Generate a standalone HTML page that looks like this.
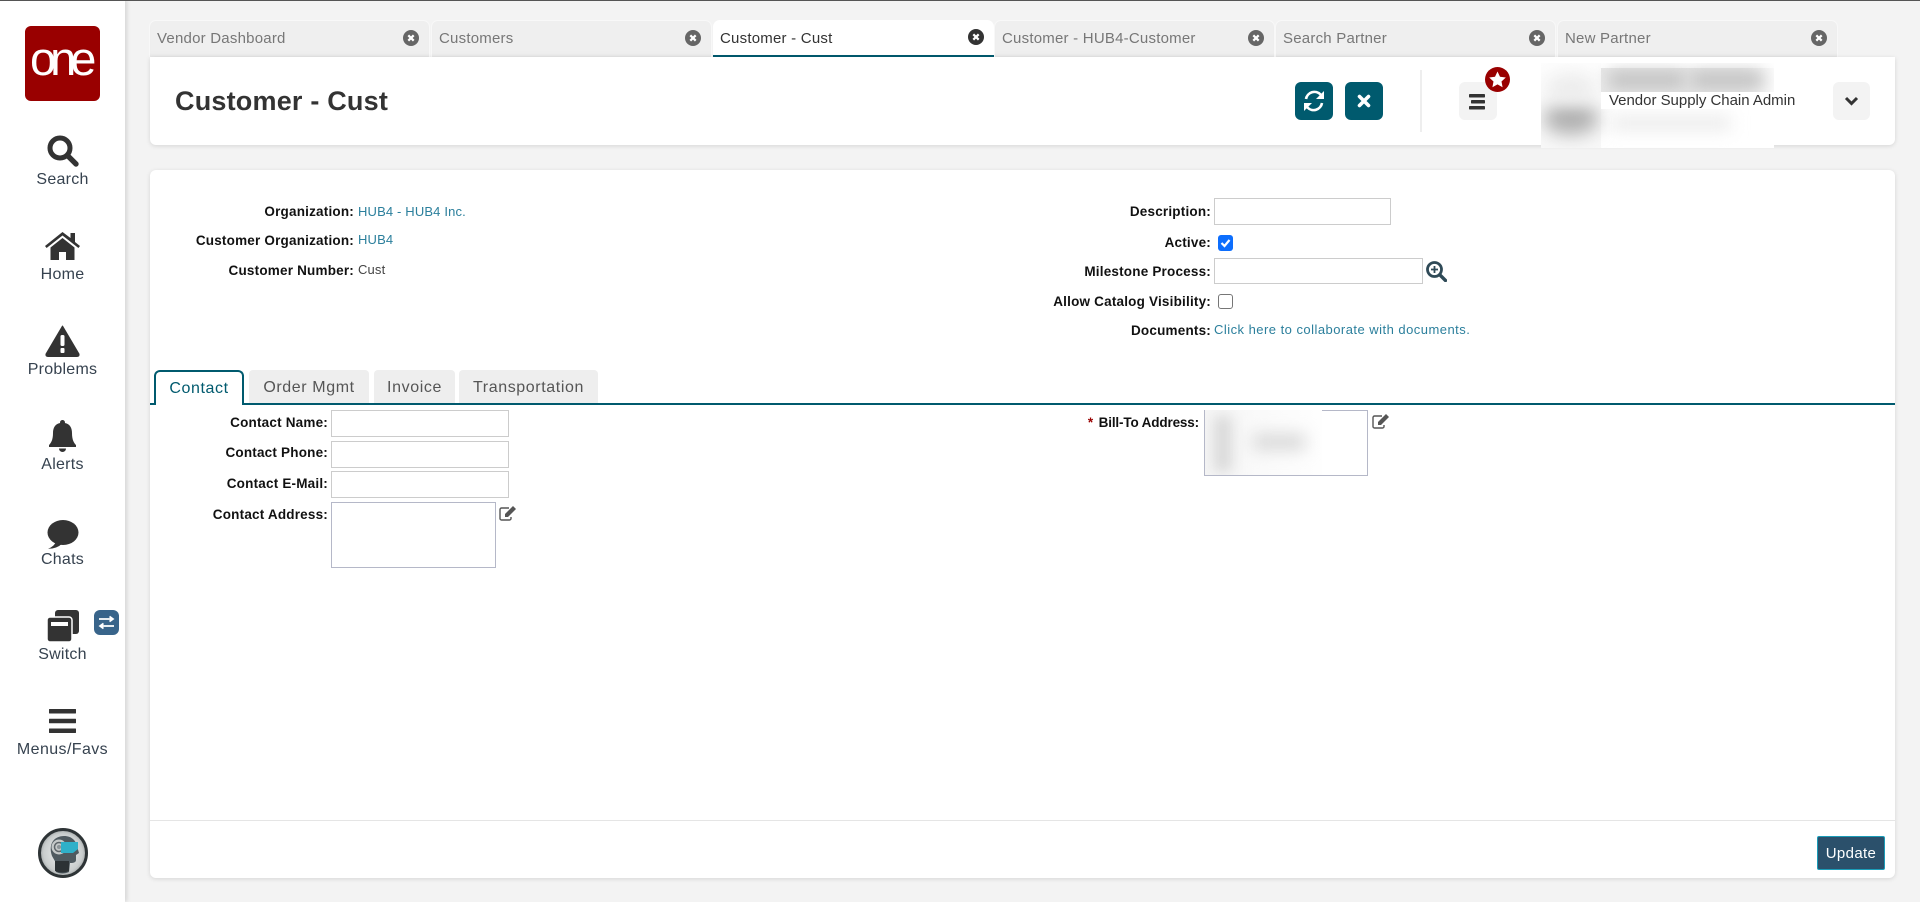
<!DOCTYPE html>
<html lang="en"><head><meta charset="utf-8"><title>Customer - Cust</title>
<style>
*{box-sizing:border-box}
html,body{margin:0;padding:0;width:1920px;height:902px;overflow:hidden;background:#f3f3f3;font-family:"Liberation Sans",sans-serif;color:#333}
.a{position:absolute}
.nav{position:absolute;left:0;width:125px;text-align:center;font-size:16px;letter-spacing:.25px;color:#36424f;line-height:20px}
.ic{position:absolute}
.tab{position:absolute;top:20px;width:281px;height:37px;background:#efefef;border:1px solid #f8f8f8;border-bottom:0;border-radius:7px 7px 0 0;font-size:15px;letter-spacing:.22px;color:#777;line-height:36px;padding-left:7px;box-shadow:inset 0 -5px 6px -5px #ddd}
.tab.on{background:#fff;color:#333;border:0;border-bottom:2px solid #005a6e;padding-left:7px;box-shadow:none;line-height:37px}
.x{position:absolute;right:10px;top:9px;width:16px;height:16px}
.l{position:absolute;font-weight:bold;font-size:13.5px;letter-spacing:.2px;color:#111;text-align:right;line-height:18px;white-space:nowrap}
.v{position:absolute;font-size:13px;letter-spacing:.15px;line-height:18px;white-space:nowrap;color:#2b7f9c}
.in{position:absolute;background:#fff;border:1px solid #ccc}
.ta{position:absolute;background:#fff;border:1px solid #b5b8c8}
.st{position:absolute;top:370px;height:33px;background:#eee;border-radius:4px 4px 0 0;font-size:16px;letter-spacing:.6px;color:#555;text-align:center;line-height:35px}
.blur{position:absolute;background:#bbb;filter:blur(6px)}
</style></head><body>
<div class="a" style="left:0;top:0;width:1920px;height:1px;background:#555;z-index:5"></div>
<div class="a" style="left:0;top:0;width:125px;height:902px;background:#fff;box-shadow:2px 0 4px rgba(0,0,0,.12)"></div>

<svg class="ic" style="left:25px;top:26px" width="75" height="75" viewBox="0 0 75 75"><rect width="75" height="75" rx="6" fill="#990000"/><text x="5" y="49" font-family="Liberation Sans,sans-serif" font-size="47" fill="#fff" letter-spacing="-6">one</text></svg>

<svg class="ic" style="left:47px;top:135px" width="32" height="32" viewBox="0 0 32 32"><circle cx="13" cy="13" r="10" fill="none" stroke="#333" stroke-width="5"/><path d="M21 21l8 8" stroke="#333" stroke-width="5.400" stroke-linecap="round"/></svg>
<div class="nav" style="top:170px">Search</div>

<svg class="ic" style="left:45px;top:232px" width="35" height="28" viewBox="0 0 35 28"><path d="M17.500 0L0 14l1.600 2L17.500 3.500 33.400 16l1.600-2-5-4V1h-4.500v5z" fill="#333"/><path d="M17.500 6L5.500 15.500V28h8.500v-8h7v8h8.500V15.500z" fill="#333"/></svg>
<div class="nav" style="top:265px">Home</div>

<svg class="ic" style="left:45px;top:325px" width="35" height="32" viewBox="0 0 35 32"><path d="M17.500 1L1 29q-.6 2.500 2 2.500h29q2.600 0 2-2.500z" fill="#333" stroke="#333" stroke-linejoin="round"/><rect x="15.500" y="10" width="4" height="11" rx="1.500" fill="#fff"/><rect x="15.500" y="23" width="4" height="5" rx="1" fill="#fff"/></svg>
<div class="nav" style="top:360px">Problems</div>

<svg class="ic" style="left:49px;top:420px" width="27" height="33" viewBox="0 0 27 33"><path d="M13.500 0a2.400 2.400 0 0 1 2.400 3C21 4 23 8 23 13c0 7 2 10 4 12v2H0v-2c2-2 4-5 4-12 0-5 2-9 7.100-10a2.400 2.400 0 0 1 2.400-3z" fill="#333"/><path d="M10 28.500h7a3.500 3.500 0 0 1-7 0z" fill="#333"/></svg>
<div class="nav" style="top:455px">Alerts</div>

<svg class="ic" style="left:47px;top:520px" width="32" height="29" viewBox="0 0 32 29"><ellipse cx="16" cy="12.500" rx="15.500" ry="12.500" fill="#333"/><path d="M9 21q-1 5-8 7.800q9 0 14-5z" fill="#333"/></svg>
<div class="nav" style="top:550px">Chats</div>

<svg class="ic" style="left:47px;top:610px" width="32" height="32" viewBox="0 0 32 32"><rect x="8" y="0" width="24" height="24" rx="3" fill="#333"/><rect x="0" y="7" width="25" height="25" rx="3" fill="#333" stroke="#fff" stroke-width="1.500"/><rect x="4" y="12" width="17" height="4" fill="#fff"/></svg>
<svg class="ic" style="left:94px;top:610px" width="25" height="25" viewBox="0 0 25 25"><rect width="25" height="25" rx="6" fill="#38648a"/><path d="M5 9h14M15.500 6.500l3.500 2.500-3.500 2.500M20 16H6M9.500 13.500L6 16l3.500 2.500" fill="none" stroke="#fff" stroke-width="1.700"/></svg>
<div class="nav" style="top:645px">Switch</div>

<svg class="ic" style="left:49px;top:709px" width="27" height="24" viewBox="0 0 27 24"><rect width="27" height="4.500" rx=".5" fill="#333"/><rect y="9.700" width="27" height="4.500" rx=".5" fill="#333"/><rect y="19.500" width="27" height="4.500" rx=".5" fill="#333"/></svg>
<div class="nav" style="top:740px;letter-spacing:.4px">Menus/Favs</div>

<svg class="ic" style="left:37.500px;top:828px" width="50" height="50" viewBox="0 0 50 50"><defs><radialGradient id="g" cx=".5" cy=".5" r=".55"><stop offset="0" stop-color="#f2f4f4"/><stop offset=".75" stop-color="#c9cdcd"/><stop offset="1" stop-color="#8c9192"/></radialGradient></defs><circle cx="25" cy="25" r="23.500" fill="url(#g)" stroke="#2e3436" stroke-width="3"/><path d="M14 28C10 16 16 8 26 8c8 0 12 5 13 10l2 7-3 2v5c0 3-4 3-6 3l-1 9c-4 2-9 2-13 0v-9z" fill="#4f5a60"/><path d="M17 33h14v10c-4 2-10 2-14 0z" fill="#2c3235"/><circle cx="21" cy="19" r="7.500" fill="#c4c8c8"/><circle cx="21" cy="19" r="4.500" fill="none" stroke="#5d6569" stroke-width="1.500"/><circle cx="21" cy="19" r="2" fill="#8b9396"/><path d="M23 14h17v7l-5 4H23z" fill="#2fb0c9"/></svg>

<div class="tab" style="left:149px">Vendor Dashboard<svg class="x" viewBox="0 0 16 16"><circle cx="8" cy="8" r="8" fill="#666"/><path d="M5.300 5.300l5.400 5.400M10.700 5.300l-5.400 5.400" stroke="#fff" stroke-width="2.200"/></svg></div>
<div class="tab" style="left:431px">Customers<svg class="x" viewBox="0 0 16 16"><circle cx="8" cy="8" r="8" fill="#666"/><path d="M5.300 5.300l5.400 5.400M10.700 5.300l-5.400 5.400" stroke="#fff" stroke-width="2.200"/></svg></div>
<div class="tab on" style="left:713px">Customer - Cust<svg class="x" viewBox="0 0 16 16"><circle cx="8" cy="8" r="8" fill="#333"/><path d="M5.300 5.300l5.400 5.400M10.700 5.300l-5.400 5.400" stroke="#fff" stroke-width="2.200"/></svg></div>
<div class="tab" style="left:994px">Customer - HUB4-Customer<svg class="x" viewBox="0 0 16 16"><circle cx="8" cy="8" r="8" fill="#666"/><path d="M5.300 5.300l5.400 5.400M10.700 5.300l-5.400 5.400" stroke="#fff" stroke-width="2.200"/></svg></div>
<div class="tab" style="left:1275px">Search Partner<svg class="x" viewBox="0 0 16 16"><circle cx="8" cy="8" r="8" fill="#666"/><path d="M5.300 5.300l5.400 5.400M10.700 5.300l-5.400 5.400" stroke="#fff" stroke-width="2.200"/></svg></div>
<div class="tab" style="left:1557px">New Partner<svg class="x" viewBox="0 0 16 16"><circle cx="8" cy="8" r="8" fill="#666"/><path d="M5.300 5.300l5.400 5.400M10.700 5.300l-5.400 5.400" stroke="#fff" stroke-width="2.200"/></svg></div>

<div class="a" style="left:150px;top:57px;width:1745px;height:88px;background:#fff;border-radius:0 0 6px 6px;box-shadow:0 1px 5px rgba(0,0,0,.12)"></div>
<div class="a" style="left:175px;top:84px;font-size:27px;font-weight:bold;letter-spacing:.2px;color:#333;line-height:34px;white-space:nowrap">Customer - Cust</div>

<svg class="ic" style="left:1295px;top:82px" width="38" height="38" viewBox="0 0 38 38"><rect width="38" height="38" rx="6" fill="#005a6e"/><path d="M11 17a8.500 8.500 0 0 1 14.500-4.500L28 15M27 21a8.500 8.500 0 0 1-14.500 4.500L10 23" fill="none" stroke="#fff" stroke-width="2.600"/><path d="M29 9v8h-8zM9 29v-8h8z" fill="#fff"/></svg>
<svg class="ic" style="left:1345px;top:82px" width="38" height="38" viewBox="0 0 38 38"><rect width="38" height="38" rx="6" fill="#005a6e"/><path d="M14.500 14.500l9 9M23.500 14.500l-9 9" stroke="#fff" stroke-width="3.600" stroke-linecap="round"/></svg>
<div class="a" style="left:1420px;top:70px;width:2px;height:62px;background:#eee"></div>
<svg class="ic" style="left:1459px;top:82px" width="38" height="38" viewBox="0 0 38 38"><rect width="38" height="38" rx="6" fill="#f3f3f3"/><rect x="10" y="12" width="16" height="3.500" rx=".8" fill="#333"/><rect x="12" y="18" width="14" height="3.500" rx=".8" fill="#333"/><rect x="10" y="24" width="16" height="3.500" rx=".8" fill="#333"/></svg>
<svg class="ic" style="left:1485px;top:67px" width="25" height="25" viewBox="0 0 25 25"><circle cx="12.500" cy="12.500" r="12.500" fill="#990000"/><path d="M12.500 4.500l2.500 5.300 5.800.7-4.300 4 1.100 5.700-5.100-2.800-5.100 2.800 1.100-5.700-4.300-4 5.800-.7z" fill="#fff"/></svg>

<div class="a" style="left:1541px;top:63px;width:233px;height:85px;background:#fff;overflow:hidden">
  <div class="a" style="left:0;top:0;width:60px;height:85px;background:linear-gradient(#fdfdfd,#f8f8f8)"></div>
  <div class="a" style="left:60px;top:5px;width:173px;height:24px;background:linear-gradient(90deg,#e8e8e8,#e8e8e8 80%,#fbfbfb)"></div>
  <div class="blur" style="left:68px;top:8px;width:76px;height:18px;background:#c2c2c2;filter:blur(8px)"></div>
  <div class="blur" style="left:150px;top:8px;width:72px;height:18px;background:#c2c2c2;filter:blur(8px)"></div>
  <div class="blur" style="left:2px;top:40px;width:56px;height:32px;border-radius:50%;background:#b0b0b0;filter:blur(9px)"></div>
  <div class="blur" style="left:5px;top:10px;width:50px;height:30px;border-radius:50%;background:#ededed;filter:blur(8px)"></div>
  <div class="blur" style="left:70px;top:52px;width:120px;height:16px;background:#ededed;filter:blur(8px)"></div>
</div>
<div class="a" style="left:1601px;top:92px;width:195px;height:17px;background:#fff"></div>
<div class="a" style="left:1609px;top:92px;font-size:15px;letter-spacing:-.02px;line-height:18px;color:#333;white-space:nowrap">Vendor Supply Chain Admin</div>
<svg class="ic" style="left:1833px;top:82px" width="37" height="38" viewBox="0 0 37 38"><rect width="37" height="38" rx="6" fill="#f3f3f3"/><path d="M13 16l5.500 5.500L24 16" fill="none" stroke="#333" stroke-width="3"/></svg>

<div class="a" style="left:150px;top:170px;width:1745px;height:708px;background:#fff;border-radius:6px;box-shadow:0 1px 5px rgba(0,0,0,.12)"></div>

<div class="l" style="right:1566px;top:203px">Organization:</div><div class="v" style="left:358px;top:203px">HUB4 - HUB4 Inc.</div>
<div class="l" style="right:1566px;top:232px">Customer Organization:</div><div class="v" style="left:358px;top:231px">HUB4</div>
<div class="l" style="right:1566px;top:262px">Customer Number:</div><div class="v" style="left:358px;top:261px;color:#444">Cust</div>

<div class="l" style="right:709px;top:203px">Description:</div><div class="in" style="left:1214px;top:198px;width:177px;height:27px"></div>
<div class="l" style="right:709px;top:234px">Active:</div>
<svg class="ic" style="left:1218px;top:235px" width="15" height="16" viewBox="0 0 15 16"><rect width="15" height="16" rx="3" fill="#0d6efd"/><path d="M3.500 8l3 3 5-6" fill="none" stroke="#fff" stroke-width="2.200"/></svg>
<div class="l" style="right:709px;top:263px">Milestone Process:</div><div class="in" style="left:1214px;top:258px;width:209px;height:26px"></div>
<svg class="ic" style="left:1426px;top:261px" width="21" height="21" viewBox="0 0 21 21"><circle cx="8.500" cy="8.500" r="7" fill="none" stroke="#2f4a57" stroke-width="2.800"/><path d="M14 14l5.500 5.500" stroke="#2f4a57" stroke-width="3.400" stroke-linecap="round"/><path d="M8.500 5v7M5 8.500h7" stroke="#2f4a57" stroke-width="1.800"/></svg>
<div class="l" style="right:709px;top:293px">Allow Catalog Visibility:</div>
<div class="a" style="left:1218px;top:294px;width:15px;height:15px;background:#fff;border:1px solid #767676;border-radius:3px"></div>
<div class="l" style="right:709px;top:322px">Documents:</div><div class="v" style="left:1214px;top:321px;letter-spacing:.47px">Click here to collaborate with documents.</div>

<div class="a" style="left:150px;top:403px;width:1745px;height:2px;background:#005a6e"></div>
<div class="a" style="left:154px;top:370px;width:90px;height:35px;background:#fff;border:2px solid #005a6e;border-bottom:0;border-radius:6px 6px 0 0;color:#005a6e;font-size:16px;letter-spacing:.6px;text-align:center;line-height:34px">Contact</div>
<div class="st" style="left:249px;width:120px">Order Mgmt</div>
<div class="st" style="left:374px;width:81px">Invoice</div>
<div class="st" style="left:459px;width:139px">Transportation</div>

<div class="l" style="right:1592px;top:414px">Contact Name:</div><div class="in" style="left:331px;top:410px;width:178px;height:27px"></div>
<div class="l" style="right:1592px;top:444px">Contact Phone:</div><div class="in" style="left:331px;top:441px;width:178px;height:27px"></div>
<div class="l" style="right:1592px;top:475px">Contact E-Mail:</div><div class="in" style="left:331px;top:471px;width:178px;height:27px"></div>
<div class="l" style="right:1592px;top:506px">Contact Address:</div><div class="ta" style="left:331px;top:502px;width:165px;height:66px"></div>
<svg class="ic" style="left:499px;top:505px" width="18" height="16" viewBox="0 0 18 16"><path d="M12 12v1.500a1.500 1.500 0 0 1-1.500 1.500h-8A1.500 1.500 0 0 1 1 13.500v-9A1.500 1.500 0 0 1 2.500 3H10" fill="none" stroke="#555" stroke-width="1.400"/><path d="M6 9l8-8 3 3-8 8H6z" fill="#555"/></svg>

<div class="l" style="right:721px;top:414px;letter-spacing:-.15px"><span style="color:#990000;margin-right:2px">*</span> Bill-To Address:</div>
<div class="ta" style="left:1204px;top:410px;width:164px;height:66px"></div>
<div class="a" style="left:1205px;top:410px;width:117px;height:65px;overflow:hidden;background:linear-gradient(90deg,#f6f6f6,#fbfbfb 60%,#fefefe)">
  <div class="blur" style="left:9px;top:6px;width:18px;height:56px;background:#d8d8d8;filter:blur(7px)"></div>
  <div class="blur" style="left:48px;top:24px;width:52px;height:16px;background:#d8d8d8;filter:blur(8px)"></div>
</div>
<svg class="ic" style="left:1372px;top:413px" width="18" height="16" viewBox="0 0 18 16"><path d="M12 12v1.500a1.500 1.500 0 0 1-1.500 1.500h-8A1.500 1.500 0 0 1 1 13.500v-9A1.500 1.500 0 0 1 2.500 3H10" fill="none" stroke="#555" stroke-width="1.400"/><path d="M6 9l8-8 3 3-8 8H6z" fill="#555"/></svg>

<div class="a" style="left:150px;top:820px;width:1745px;height:1px;background:#e5e5e5"></div>
<div class="a" style="left:1817px;top:836px;width:68px;height:34px;background:#2b506b;border:1px solid #1a9cb8;border-radius:2px;color:#fff;font-size:15px;letter-spacing:.35px;text-align:center;line-height:33px">Update</div>
</body></html>
